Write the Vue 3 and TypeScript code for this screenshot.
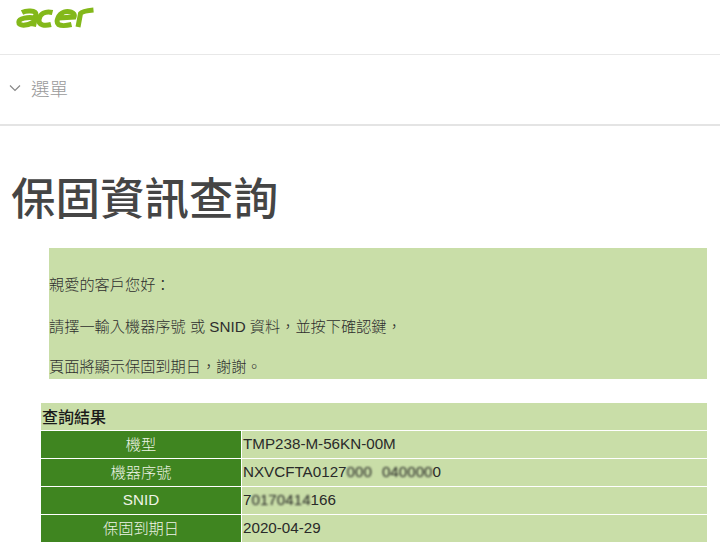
<script setup lang="ts">
interface Row { label: string; value: string; masks?: string[]; tail?: string }
const rows: Row[] = [
  { label: '機型', value: 'TMP238-M-56KN-00M' },
  { label: '機器序號', value: 'NXVCFTA0127', masks: ['000', '040000'], tail: '0' },
  { label: 'SNID', value: '7', masks: ['0170414'], tail: '166' },
  { label: '保固到期日', value: '2020-04-29' },
]
</script>

<template>
  <div class="page">
    <header class="top">
      <svg class="logo" width="80" height="22" viewBox="0 0 80 22" fill="none" stroke="#83b81a" stroke-width="5" stroke-linecap="butt">
        <path d="M6 5.5 C10 3.5 20 3 20 7.5 L17.5 19.5 M19 11 C12 10 3 11 2.8 15 C2.5 19.5 11 19 18 15" />
        <path d="M36.5 5.5 C29 3.5 24 7 23 12.5 C22 18.5 29 19 35 17.5" />
        <path d="M42.5 11 L58 10 C60 5 52 3.6 48 5 C42 7 39.5 15 42.5 17.5 C45 19 50 18.8 55.5 17.5" />
        <path d="M62 20 L64.5 6.5 C66 4.5 72 3.5 77.5 3" />
      </svg>
    </header>
    <nav class="menu">
      <svg class="chev" width="12" height="8" viewBox="0 0 12 8" fill="none" stroke="#888" stroke-width="1.2"><path d="M1 1.5 L6 6.5 L11 1.5" /></svg>
      <span>選單</span>
    </nav>
    <h1>保固資訊查詢</h1>
    <section class="notice">
      <p>親愛的客戶您好&#xFF1A;</p>
      <p>請擇一輸入機器序號 或 SNID 資料&#xFF0C;並按下確認鍵&#xFF0C;</p>
      <p>頁面將顯示保固到期日&#xFF0C;謝謝。</p>
    </section>
    <table class="result">
      <colgroup>
        <col class="col-label" />
        <col />
      </colgroup>
      <thead>
        <tr><th colspan="2">查詢結果</th></tr>
      </thead>
      <tbody>
        <tr v-for="r in rows" :key="r.label">
          <td class="label">{{ r.label }}</td>
          <td class="value">{{ r.value }}<template v-for="(m, i) in r.masks" :key="m"><span v-if="i > 0" class="gap"></span><span class="mask">{{ m }}</span></template>{{ r.tail }}</td>
        </tr>
      </tbody>
    </table>
  </div>
</template>

<style>
html, body { margin: 0; background: #fff; }
</style>

<style scoped>
.page {
  width: 720px;
  height: 551px;
  overflow: hidden;
  font-family: "Liberation Sans", "Noto Sans CJK TC", sans-serif;
  color: #333;
}
.top {
  height: 54px;
  border-bottom: 1px solid #e8e8e8;
  padding-left: 16px;
}
.logo { display: block; padding-top: 7px; }
.menu {
  height: 71px;
  display: flex;
  align-items: center;
  gap: 10px;
  padding-left: 9px;
  padding-bottom: 3px;
  box-sizing: border-box;
  border-bottom: 2px solid #e4e4e4;
  font-size: 18.5px;
  color: #9a9a9a;
  font-weight: 300;
}
h1 {
  margin: 49px 0 0 11px;
  font-size: 44.5px;
  line-height: 50px;
  font-weight: 500;
  color: #454545;
}
.notice {
  margin: 23px 13px 0 49px;
  height: 131px;
  background: #c9dea8;
  padding-top: 27px;
  box-sizing: border-box;
  font-size: 15.2px;
  color: #2e2e2e;
  font-weight: 300;
}
.notice p { margin: 0 0 20px; line-height: 20px; }
.notice p:first-child { margin-bottom: 22px; }
.result {
  margin: 24px 0 0 40px;
  width: 667px;
  border-collapse: collapse;
  font-size: 15.2px;
  table-layout: fixed;
}
.col-label { width: 201px; }
th, td { padding: 0 0 2px; box-sizing: border-box; border: 1px solid #fff; border-width: 1px 0 0 1px; }
thead th { border-top: 0; }
th {
  height: 27px;
  background: #c9dea8;
  text-align: left;
  padding: 0 0 0 1px;
  font-size: 16px;
  font-weight: 500;
  color: #1a1a1a;
}
td { height: 28px; }
.label {
  background: #3f8520;
  color: #eef4e6;
  text-align: center;
  font-weight: 300;
}
.value {
  background: #c9dea8;
  padding-left: 1px;
  color: #2a2a2a;
}
.mask { display: inline-block; filter: blur(1px); color: #222; }
.gap { display: inline-block; width: 10px; }
</style>
